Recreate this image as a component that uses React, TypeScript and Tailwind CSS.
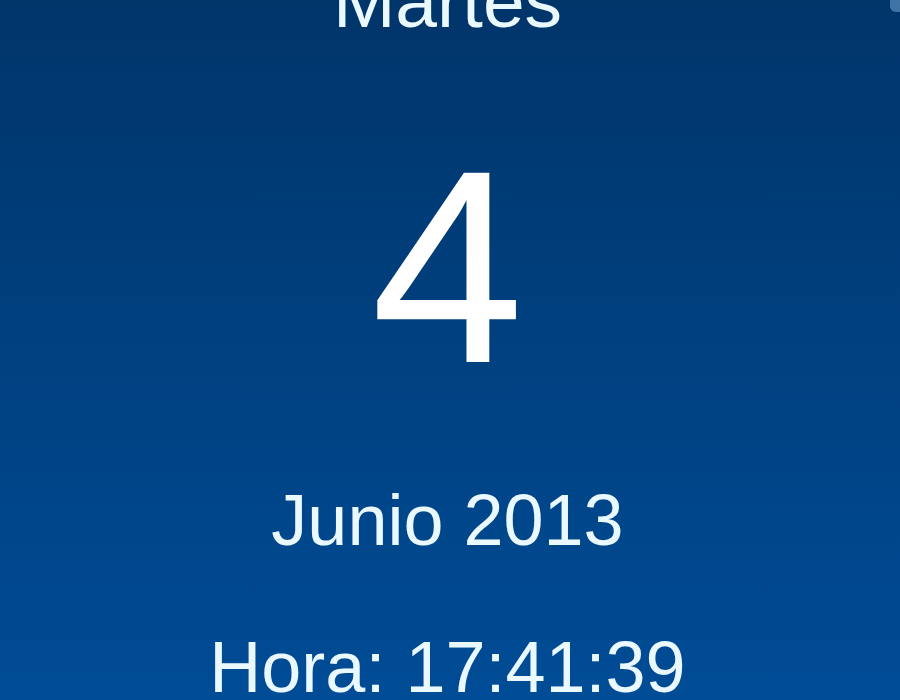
import React from "react";

export default function App() {
  return (
    <div className="relative w-full h-[700px] overflow-hidden bg-gradient-to-b from-[#00356a] to-[#004c96] text-[#eaf8ff] [font-family:'Liberation_Sans',Arial,sans-serif]">
      <div className="absolute right-0 top-0 w-[10px] h-[12px] rounded-bl-[6px] bg-[#5a8fc0] opacity-70" />
      <div className="flex flex-col items-center pr-[5px]">
        <div className="mt-[-36px] text-[75px] leading-none whitespace-nowrap">Martes</div>
        <div className="mt-[90px] text-[275px] leading-none text-white">4</div>
        <div className="mt-[80px] text-[72px] leading-none whitespace-nowrap">Junio 2013</div>
        <div className="mt-[75px] text-[72px] leading-none whitespace-nowrap">Hora: 17:41:39</div>
      </div>
    </div>
  );
}
